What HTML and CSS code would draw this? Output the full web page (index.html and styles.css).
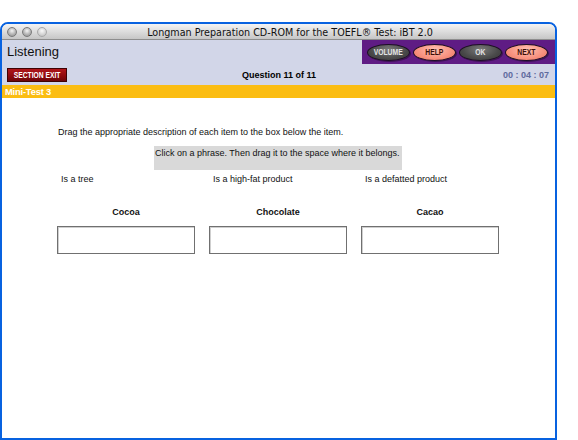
FILE: index.html
```html
<!DOCTYPE html>
<html>
<head>
<meta charset="utf-8">
<link rel="stylesheet" href="styles.css">
</head>
<body>
<div class="window">
  <div class="titlebar">
    <div class="lights">
      <span class="light"></span><span class="light"></span><span class="light light-off"></span>
    </div>
    <div class="title">Longman Preparation CD-ROM for the TOEFL® Test: iBT 2.0</div>
  </div>
  <div class="header">
    <div class="row1">
      <div class="section-name">Listening</div>
      <div class="panel">
        <span class="pill pill-dark"><span class="cond">VOLUME</span></span>
        <span class="pill pill-light"><span class="cond">HELP</span></span>
        <span class="pill pill-dark"><span class="cond">OK</span></span>
        <span class="pill pill-light"><span class="cond">NEXT</span></span>
      </div>
    </div>
    <div class="row2">
      <span class="exit"><span class="cond">SECTION EXIT</span></span>
      <span class="question">Question 11 of 11</span>
      <span class="timer">00 : 04 : 07</span>
    </div>
  </div>
  <div class="subbar">Mini-Test 3</div>
  <div class="content">
    <p class="instr">Drag the appropriate description of each item to the box below the item.</p>
    <div class="hint">Click on a phrase. Then drag it to the space where it belongs.</div>
    <div class="grid">
      <div class="phrase">Is a tree</div>
      <div class="phrase">Is a high-fat product</div>
      <div class="phrase">Is a defatted product</div>
      <div class="label">Cocoa</div>
      <div class="label">Chocolate</div>
      <div class="label">Cacao</div>
      <div class="box"></div>
      <div class="box"></div>
      <div class="box"></div>
    </div>
  </div>
</div>
</body>
</html>
```
FILE: styles.css
```css
html, body {
  margin: 0;
  padding: 0;
  background: #ffffff;
}
body {
  padding-top: 22px;
  font-family: "Liberation Sans", Arial, sans-serif;
}
.window {
  width: 553px;
  height: 414px;
  border: 2px solid #0862e0;
  border-radius: 8px 8px 0 0;
  overflow: hidden;
  display: flex;
  flex-direction: column;
  background: #ffffff;
}
.titlebar {
  height: 15px;
  flex: none;
  display: flex;
  align-items: center;
  background: linear-gradient(#f4f4f4, #d8d8d8 60%, #c6c6c6);
  border-bottom: 1px solid #8d8d8d;
}
.lights {
  display: flex;
  gap: 5px;
  padding-left: 5px;
}
.light {
  width: 10px;
  height: 10px;
  border-radius: 50%;
  box-sizing: border-box;
  border: 1px solid #7a7a7a;
  background: radial-gradient(circle at 50% 35%, #f4f4f4, #b4b4b4 55%, #8e8e8e);
}
.light-off {
  border-color: #a8a8a8;
  background: radial-gradient(circle at 50% 35%, #fafafa, #d2d2d2 60%, #b8b8b8);
}
.title {
  flex: 1;
  text-align: center;
  font-family: "DejaVu Sans", sans-serif;
  font-size: 9.6px;
  color: #111;
  margin-right: 22px;
  padding-top: 1px;
}
.header {
  background: #d2d6e8;
  flex: none;
}
.row1 {
  display: flex;
  justify-content: space-between;
  height: 24px;
}
.section-name {
  font-size: 13px;
  color: #111;
  padding: 4px 0 0 5px;
}
.panel {
  width: 188px;
  background: #5f1c84;
  display: flex;
  align-items: center;
  gap: 3px;
  padding-left: 5px;
}
.pill {
  width: 43px;
  height: 17px;
  box-sizing: border-box;
  border-radius: 50%;
  border: 1px solid #1d0f24;
  display: flex;
  align-items: center;
  justify-content: center;
  font-size: 8.5px;
  font-weight: bold;
  box-shadow: 1px 1px 0 rgba(0,0,0,0.35);
}
.cond {
  display: inline-block;
  transform: scaleX(0.8);
  white-space: nowrap;
}
.pill-dark {
  background: radial-gradient(ellipse at 50% 30%, #7a7a7a, #4a4a4a 60%, #353535);
  color: #e4e4e4;
}
.pill-light {
  background: radial-gradient(ellipse at 50% 30%, #ffc0b0, #f7917f 60%, #e9735f);
  color: #3a0f08;
}
.row2 {
  height: 21px;
  display: flex;
  align-items: center;
  padding: 0 6px 0 5px;
}
.exit {
  width: 60px;
  height: 14px;
  box-sizing: border-box;
  background: linear-gradient(#b0161a, #8e0a0d 60%, #6d0508);
  border: 1px solid #3e0204;
  color: #fff;
  font-size: 8.4px;
  font-weight: bold;
  display: flex;
  align-items: center;
  justify-content: center;
}
.question {
  flex: 1;
  text-align: center;
  font-size: 9px;
  font-weight: bold;
  color: #000;
  margin-left: 2px;
}
.timer {
  font-size: 9px;
  font-weight: bold;
  color: #5f6b9e;
  width: 60px;
  text-align: right;
}
.subbar {
  height: 13px;
  flex: none;
  background: #fbbd12;
  color: #fff;
  font-size: 9.4px;
  font-weight: bold;
  line-height: 13px;
  padding-left: 3px;
  letter-spacing: -0.2px;
}
.content {
  flex: 1;
  padding: 29px 0 0 55px;
  font-size: 9px;
  color: #111;
}
.instr {
  margin: 0 0 8px 1px;
  line-height: 11px;
}
.hint {
  margin-left: 97px;
  width: 248px;
  height: 24px;
  padding: 2px 0 0 1px;
  box-sizing: border-box;
  background: #d9d9d9;
  line-height: 11px;
}
.grid {
  display: grid;
  grid-template-columns: repeat(3, 138px);
  column-gap: 14px;
  margin-top: 4px;
}
.phrase {
  padding-left: 4px;
  line-height: 11px;
}
.label {
  text-align: center;
  font-weight: bold;
  margin-top: 22px;
  line-height: 11px;
}
.box {
  margin-top: 8px;
  height: 28px;
  box-sizing: border-box;
  border: 1px solid #707070;
  box-shadow: inset 1px 1px 0 #cfcfcf;
  background: #fff;
}
```
